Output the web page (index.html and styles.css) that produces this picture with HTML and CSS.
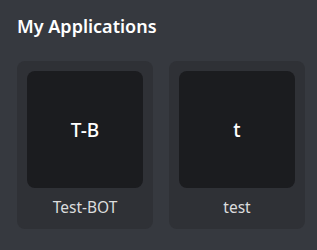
FILE: index.html
```html
<!DOCTYPE html>
<html>
<head>
<meta charset="utf-8">
<link rel="stylesheet" href="styles.css">
</head>
<body>
<div class="page">
  <h2 class="title">My Applications</h2>
  <div class="apps">
    <div class="card">
      <div class="icon">T-B</div>
      <div class="name">Test-BOT</div>
    </div>
    <div class="card">
      <div class="icon">t</div>
      <div class="name">test</div>
    </div>
  </div>
</div>
</body>
</html>
```
FILE: styles.css
```css
html, body {
  margin: 0;
  padding: 0;
  background: #36393f;
  width: 317px;
  height: 250px;
  overflow: hidden;
}
.page {
  padding: 14px 17px 0 17px;
  font-family: "Noto Sans", "Open Sans", sans-serif;
}
.title {
  margin: 0;
  color: #ffffff;
  font-size: 18px;
  font-weight: 600;
  line-height: 24px;
  height: 47px;
}
.apps {
  display: flex;
  gap: 16px;
}
.card {
  width: 136px;
  height: 168px;
  box-sizing: border-box;
  padding: 10px 10px 0 10px;
  background: #2f3136;
  border-radius: 8px;
  display: flex;
  flex-direction: column;
  align-items: center;
}
.icon {
  width: 116px;
  height: 117px;
  background: #1b1c1f;
  border-radius: 8px;
  display: flex;
  align-items: center;
  justify-content: center;
  color: #ffffff;
  font-size: 19px;
  font-weight: 500;
}
.name {
  margin-top: 9px;
  color: #dcddde;
  font-size: 15.5px;
  line-height: 20px;
}
```
